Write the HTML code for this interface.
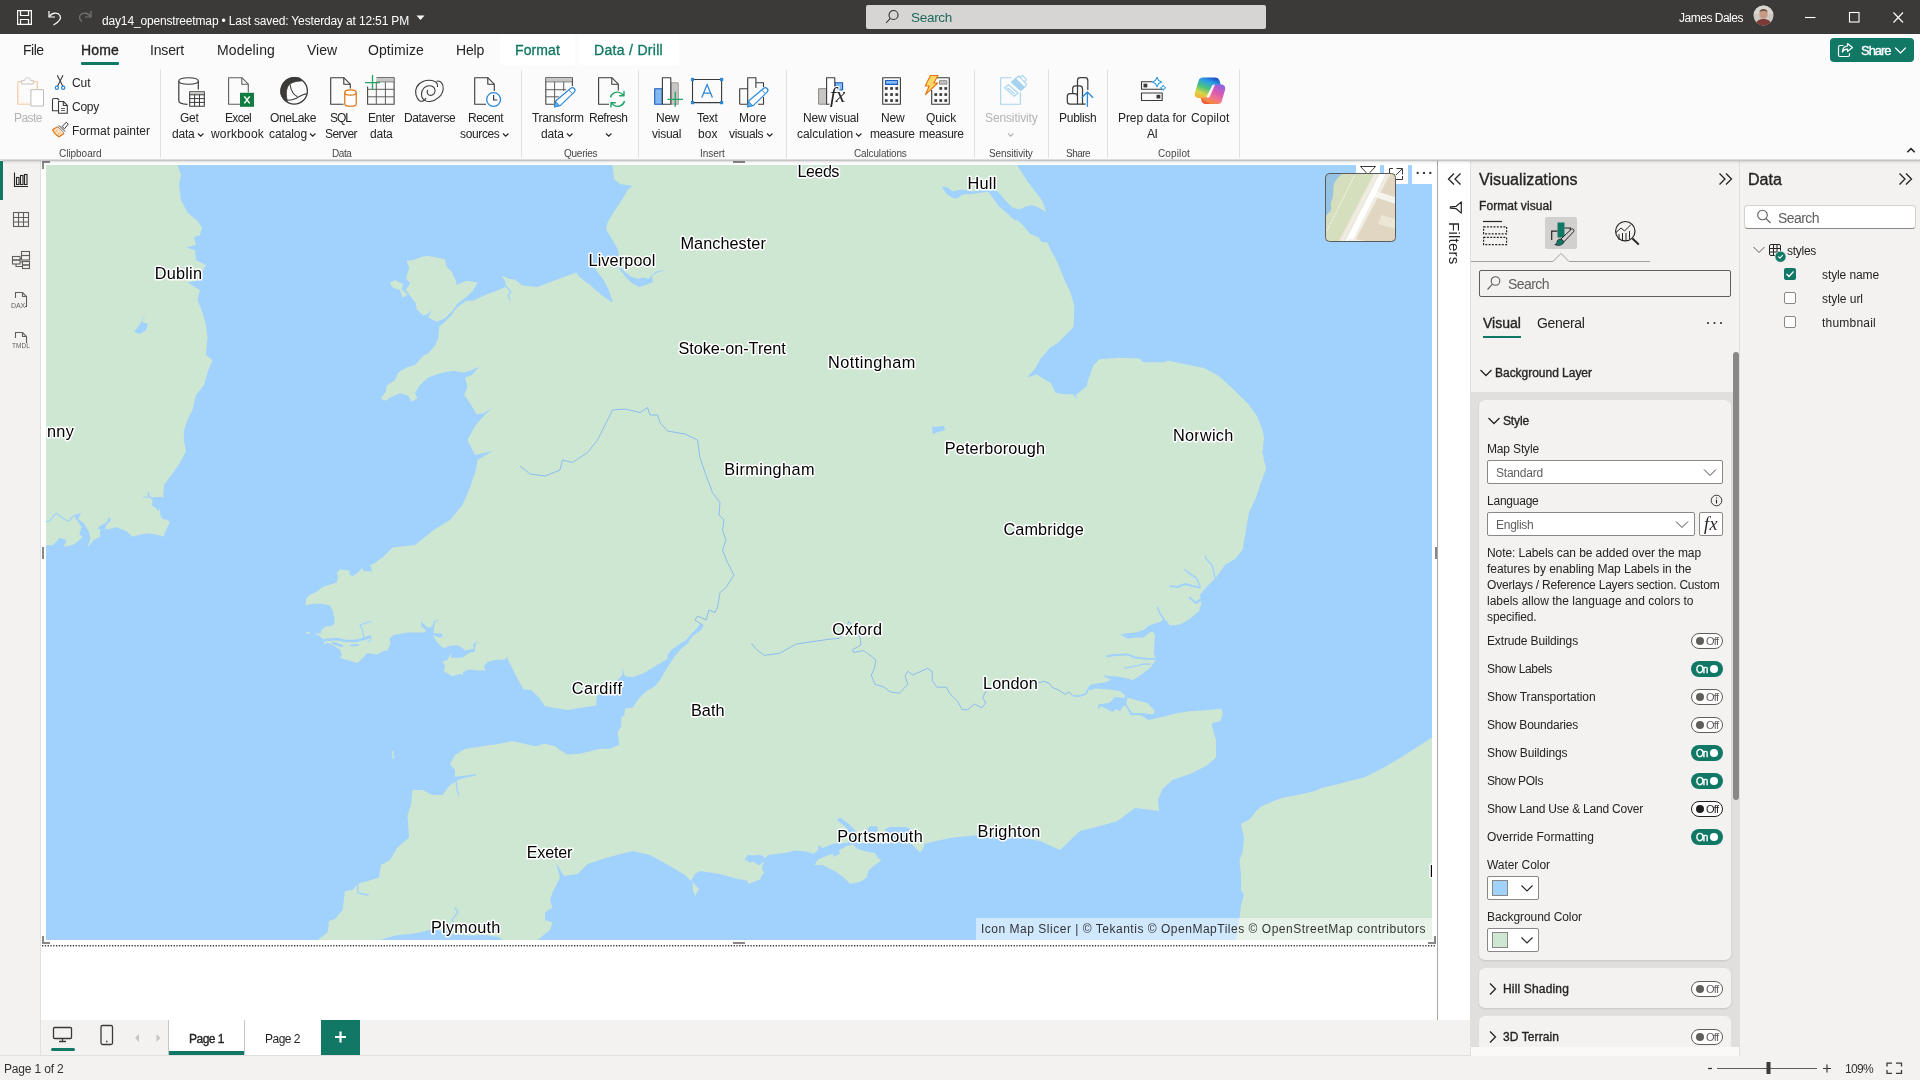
<!DOCTYPE html>
<html lang="en"><head><meta charset="utf-8"><title>day14_openstreetmap - Power BI Desktop</title>
<style>
html,body{margin:0;padding:0;background:#f3f2f1;}
body{width:1920px;height:1080px;overflow:hidden;font-family:"Liberation Sans",sans-serif;}
#app{position:relative;width:1920px;height:1080px;overflow:hidden;background:#f3f2f1;}
.t{position:absolute;white-space:nowrap;}
.a{position:absolute;}
svg{position:absolute;overflow:visible;}
.ml{font-family:"Liberation Sans",sans-serif;font-size:16.3px;fill:#000;stroke:#fff;stroke-width:3px;stroke-linejoin:round;paint-order:stroke fill;}
.t{will-change:transform;}

</style></head>
<body>
<div id="app">
<div class="a" style="left:0;top:0;width:1920px;height:34px;background:#3b3a39;"></div>
<svg class="a" style="left:0;top:0" width="100" height="34" viewBox="0 0 100 34" fill="none" stroke="#fff" stroke-width="1.2">
<path d="M17.6,10.600 H31.400 V24.400 H17.600 Z"/><path d="M20.500,10.600 V15.500 H28.500 V10.600"/><path d="M20.500,24.400 V19.500 H28.500 V24.400"/>
<path d="M49,11 V17 H55"/><path d="M49.500,16.500 C52,12.500 58,12 60,15.500 C62,19.500 58,22.500 53.500,25"/>
<g stroke="#797775"><path d="M91,11 V17 H85"/><path d="M90.500,16.500 C88,12.500 82,12 80,15.500 C79,18 80,20 82,21.500"/></g>
</svg>
<div class="t" style="left:102.00px;top:14px;font-size:12px;line-height:14px;color:#fff;letter-spacing:-0.159px;">day14_openstreetmap • Last saved: Yesterday at 12:51 PM</div>
<svg class="a" style="left:415px;top:14px" width="12" height="8"><path d="M1.500,1.500 H9.500 L5.500,6 Z" fill="#fff"/></svg>
<div class="a" style="left:866px;top:5px;width:400px;height:24px;background:#d6d5d3;border-radius:2px;"></div>
<svg class="a" style="left:884px;top:8px" width="18" height="18" viewBox="0 0 18 18" fill="none" stroke="#323130" stroke-width="1.100"><circle cx="9.500" cy="7" r="4.500"/><path d="M6.300,10.300 L2,15"/></svg>
<div class="t" style="left:911.30px;top:10px;font-size:13.5px;line-height:15px;color:#20695b;letter-spacing:-0.296px;">Search</div>
<div class="t" style="left:1679.00px;top:11px;font-size:12px;line-height:14px;color:#fff;letter-spacing:-0.487px;">James Dales</div>
<svg class="a" style="left:1753px;top:5px" width="21" height="21" viewBox="0 0 21 21"><defs><clipPath id="av"><circle cx="10.500" cy="10.500" r="10"/></clipPath></defs>
<g clip-path="url(#av)"><rect width="21" height="21" fill="#cfc9c4"/><rect x="0" y="0" width="21" height="9" fill="#d9d6d2"/><ellipse cx="10.500" cy="9" rx="4.200" ry="5" fill="#c79a85"/><path d="M6.300,7 C7,3 14,3 14.700,7 C13,5.500 8,5.500 6.300,7Z" fill="#6b5548"/><path d="M2,21 C3,15 7,14 10.500,14 C14,14 18,15 19,21Z" fill="#7c3a36"/></g></svg>
<svg class="a" style="left:1800px;top:8px" width="110" height="20" viewBox="1800 8 110 20" fill="none" stroke="#fff" stroke-width="1.100">
<path d="M1805,17.500 H1815.500"/><rect x="1849.500" y="12.500" width="9.500" height="9.500"/><path d="M1893.500,12.500 L1903,22.500 M1903,12.500 L1893.500,22.500"/></svg>
<div class="a" style="left:0;top:34px;width:1920px;height:126px;background:#fbfbfb;"></div>
<div class="a" style="left:0;top:159px;width:1920px;height:1px;background:#d8d6d4;"></div>
<div class="a" style="left:0;top:160px;width:1920px;height:1px;background:#e8e6e4;"></div>
<div class="a" style="left:500px;top:35px;width:75px;height:30px;background:#fff;"></div>
<div class="a" style="left:579px;top:35px;width:100px;height:30px;background:#fff;"></div>
<div class="t" style="left:23.00px;top:42px;font-size:14px;line-height:16px;color:#252423;letter-spacing:-0.515px;">File</div>
<div class="t" style="left:81.00px;top:42px;font-size:14px;line-height:16px;color:#252423;letter-spacing:0.164px;-webkit-text-stroke:0.35px #252423;">Home</div>
<div class="t" style="left:150.00px;top:42px;font-size:14px;line-height:16px;color:#252423;letter-spacing:-0.169px;">Insert</div>
<div class="t" style="left:217.00px;top:42px;font-size:14px;line-height:16px;color:#252423;letter-spacing:0.148px;">Modeling</div>
<div class="t" style="left:307.00px;top:42px;font-size:14px;line-height:16px;color:#252423;letter-spacing:-0.023px;">View</div>
<div class="t" style="left:368.00px;top:42px;font-size:14px;line-height:16px;color:#252423;letter-spacing:0.096px;">Optimize</div>
<div class="t" style="left:456.00px;top:42px;font-size:14px;line-height:16px;color:#252423;letter-spacing:-0.198px;">Help</div>
<div class="t" style="left:515.00px;top:42px;font-size:14px;line-height:16px;color:#117865;letter-spacing:0.110px;-webkit-text-stroke:0.35px #117865;">Format</div>
<div class="t" style="left:594.00px;top:42px;font-size:14px;line-height:16px;color:#117865;letter-spacing:0.305px;-webkit-text-stroke:0.35px #117865;">Data / Drill</div>
<div class="a" style="left:81px;top:62px;width:38px;height:3px;background:#117865;border-radius:1px;"></div>
<div class="a" style="left:1830px;top:38px;width:84px;height:24px;background:#117865;border-radius:4px;"></div>
<svg class="a" style="left:1836px;top:41px" width="74" height="20" viewBox="1840 41 74 20" fill="none" stroke="#fff" stroke-width="1.200" stroke-linejoin="round" stroke-linecap="round">
<path d="M1847,45.500 H1844 C1843,45.500 1842.500,46 1842.500,47 V55 C1842.500,56 1843,56.500 1844,56.500 H1852 C1853,56.500 1853.500,56 1853.500,55 V53.500"/>
<path d="M1851.500,43.500 L1856.500,47.500 L1851.500,51.500 V49.200 C1849,49 1847.500,50 1846.300,52 C1846.500,48.500 1848.500,46.200 1851.500,46 Z"/>
<path d="M1899.500,48 L1904.500,53 L1909.500,48"/></svg>
<div class="t" style="left:1861.00px;top:43px;font-size:13px;line-height:15px;color:#fff;letter-spacing:-1.038px;-webkit-text-stroke:0.35px #fff;">Share</div>
<div class="a" style="left:0;top:161px;width:40px;height:896px;background:#f3f2f1;"></div>
<div class="a" style="left:0;top:161px;width:3px;height:39px;background:#117865;"></div>
<svg class="a" style="left:0;top:160px" width="40" height="200" viewBox="0 160 40 200" fill="none" stroke="#252423" stroke-width="1.100">
<path d="M14.500,172.500 V186.500 H28"/><rect x="16.500" y="177.500" width="2.500" height="7"/><rect x="20.500" y="175.500" width="2.500" height="9"/><rect x="24.500" y="174.500" width="2.500" height="10"/>
<g stroke="#605e5c"><rect x="13.500" y="212.500" width="15" height="14"/><path d="M13.500,217.500 H28.500 M13.500,222 H28.500 M18.500,212.500 V226.500 M23.500,212.500 V226.500"/>
<rect x="21.500" y="251.500" width="8" height="4"/><rect x="21.500" y="255.500" width="8" height="4.500"/><rect x="12.500" y="256.500" width="7.500" height="3.500"/><rect x="12.500" y="260" width="7.500" height="4"/><rect x="22.500" y="261.500" width="7" height="3.500"/><rect x="22.500" y="265" width="7" height="3.500"/><path d="M20,258.500 H21.500 M20,262 H22.500 M16,264 V266.500 H22.500"/>
<path d="M15.500,298 V292.500 H22.500 L26.500,296.500 V306.500 H25 M22.500,292.500 V296.500 H26.500"/>
<path d="M15.500,338 V332.500 H22.500 L26.500,336.500 V343 M22.500,332.500 V336.500 H26.500"/></g></svg>
<div class="t" style="left:10.70px;top:302px;font-size:7px;line-height:7px;color:#605e5c;letter-spacing:-0.131px;">DAX</div>
<div class="t" style="left:11.70px;top:342px;font-size:6.5px;line-height:7px;color:#605e5c;letter-spacing:0.076px;">TMDL</div>
<div class="a" style="left:41px;top:1020px;width:1430px;height:36px;background:#f3f2f1;"></div>
<div class="a" style="left:0;top:1055px;width:1920px;height:1px;background:#e1dfdd;"></div><div class="a" style="left:40px;top:1020px;width:1px;height:35px;background:#e1dfdd;"></div>
<div class="a" style="left:0;top:1056px;width:1920px;height:24px;background:#f3f2f1;"></div>
<svg class="a" style="left:50px;top:1022px" width="120" height="32" viewBox="50 1022 120 32" fill="none" stroke="#3b3a39" stroke-width="1.300">
<rect x="53.500" y="1027.500" width="18" height="11" rx="1"/><path d="M59,1041.500 H66 M62.500,1038.500 V1041.500"/>
<rect x="101" y="1025.500" width="11.500" height="19" rx="1.500"/><path d="M106,1041.500 H107.500"/>
<path d="M139,1034 L135,1038 L139,1042 Z" fill="#c8c6c4" stroke="none"/><path d="M156.500,1034 L160.500,1038 L156.500,1042 Z" fill="#c8c6c4" stroke="none"/></svg>
<div class="a" style="left:51px;top:1048px;width:24px;height:3px;background:#117865;border-radius:1.5px;"></div>
<div class="a" style="left:169px;top:1020px;width:75px;height:35px;background:#fff;"></div>
<div class="a" style="left:168px;top:1020px;width:1px;height:35px;background:#c8c6c4;"></div>
<div class="a" style="left:244px;top:1020px;width:1px;height:35px;background:#c8c6c4;"></div>
<div class="a" style="left:245px;top:1020px;width:76px;height:35px;background:#fff;"></div>
<div class="a" style="left:169px;top:1051px;width:75px;height:4px;background:#117865;"></div>
<div class="t" style="left:189.00px;top:1032px;font-size:12px;line-height:14px;color:#252423;letter-spacing:-0.506px;-webkit-text-stroke:0.35px #252423;">Page 1</div>
<div class="t" style="left:265.00px;top:1032px;font-size:12px;line-height:14px;color:#252423;letter-spacing:-0.506px;">Page 2</div>
<div class="a" style="left:321px;top:1020px;width:39px;height:35px;background:#117865;"></div>
<svg class="a" style="left:321px;top:1020px" width="39" height="35"><path d="M14,17 H25 M19.500,11.500 V22.500" stroke="#fff" stroke-width="2.200"/></svg>
<div class="t" style="left:4.00px;top:1062px;font-size:12px;line-height:14px;color:#323130;letter-spacing:-0.171px;">Page 1 of 2</div>
<svg class="a" style="left:1700px;top:1058px" width="220" height="22" viewBox="1700 1058 220 22" fill="none" stroke="#3b3a39" stroke-width="1">
<path d="M1708,1068.500 H1712" stroke-width="1.300"/><path d="M1717,1068.500 H1817" stroke="#605e5c"/><rect x="1766.500" y="1062" width="4" height="12" fill="#3b3a39" stroke="none"/>
<path d="M1823,1068.500 H1831 M1827,1064.500 V1072.500" stroke-width="1.200"/>
<path d="M1887,1066.500 V1063.200 H1892 M1896,1063.200 H1901.500 V1066.500 M1901.500,1070 V1073.300 H1896 M1892,1073.300 H1887 V1070" stroke-width="1.300"/></svg>
<div class="t" style="left:1845.00px;top:1062px;font-size:12px;line-height:14px;color:#323130;letter-spacing:-0.673px;">109%</div>
<div class="a" style="left:160px;top:70px;width:1px;height:88px;background:#e1dfdd;"></div>
<div class="a" style="left:521px;top:70px;width:1px;height:88px;background:#e1dfdd;"></div>
<div class="a" style="left:638px;top:70px;width:1px;height:88px;background:#e1dfdd;"></div>
<div class="a" style="left:786px;top:70px;width:1px;height:88px;background:#e1dfdd;"></div>
<div class="a" style="left:974px;top:70px;width:1px;height:88px;background:#e1dfdd;"></div>
<div class="a" style="left:1048px;top:70px;width:1px;height:88px;background:#e1dfdd;"></div>
<div class="a" style="left:1107px;top:70px;width:1px;height:88px;background:#e1dfdd;"></div>
<div class="a" style="left:1239px;top:70px;width:1px;height:88px;background:#e1dfdd;"></div>
<div class="t" style="left:58.75px;top:148px;font-size:10px;line-height:11px;color:#484644;letter-spacing:-0.034px;">Clipboard</div>
<div class="t" style="left:331.65px;top:148px;font-size:10px;line-height:11px;color:#484644;letter-spacing:-0.406px;">Data</div>
<div class="t" style="left:563.75px;top:148px;font-size:10px;line-height:11px;color:#484644;letter-spacing:-0.245px;">Queries</div>
<div class="t" style="left:700.40px;top:148px;font-size:10px;line-height:11px;color:#484644;letter-spacing:-0.068px;">Insert</div>
<div class="t" style="left:853.95px;top:148px;font-size:10px;line-height:11px;color:#484644;letter-spacing:-0.148px;">Calculations</div>
<div class="t" style="left:989.15px;top:148px;font-size:10px;line-height:11px;color:#484644;letter-spacing:-0.120px;">Sensitivity</div>
<div class="t" style="left:1065.80px;top:148px;font-size:10px;line-height:11px;color:#484644;letter-spacing:-0.537px;">Share</div>
<div class="t" style="left:1157.80px;top:148px;font-size:10px;line-height:11px;color:#484644;letter-spacing:0.125px;">Copilot</div>
<div class="t" style="left:14.00px;top:111px;font-size:12px;line-height:14px;color:#b5b3b1;letter-spacing:-0.537px;">Paste</div>
<div class="t" style="left:72.00px;top:76px;font-size:12px;line-height:14px;color:#252423;letter-spacing:-0.058px;">Cut</div>
<div class="t" style="left:72.00px;top:100px;font-size:12px;line-height:14px;color:#252423;letter-spacing:-0.253px;">Copy</div>
<div class="t" style="left:72.00px;top:124px;font-size:12px;line-height:14px;color:#252423;letter-spacing:-0.002px;">Format painter</div>
<div class="t" style="left:179.75px;top:111px;font-size:12px;line-height:14px;color:#252423;letter-spacing:-0.281px;">Get</div>
<div class="t" style="left:171.80px;top:127px;font-size:12px;line-height:14px;color:#252423;letter-spacing:-0.214px;">data</div>
<svg class="a" style="left:196.5px;top:131.8px" width="8" height="6"><path d="M1,1.500 L3.700,4.200 L6.400,1.500" fill="none" stroke="#252423" stroke-width="1.100"/></svg>
<div class="t" style="left:224.50px;top:111px;font-size:12px;line-height:14px;color:#252423;letter-spacing:-0.669px;">Excel</div>
<div class="t" style="left:211.00px;top:127px;font-size:12px;line-height:14px;color:#252423;letter-spacing:0.205px;">workbook</div>
<div class="t" style="left:270.00px;top:111px;font-size:12px;line-height:14px;color:#252423;letter-spacing:-0.386px;">OneLake</div>
<div class="t" style="left:268.75px;top:127px;font-size:12px;line-height:14px;color:#252423;letter-spacing:-0.099px;">catalog</div>
<svg class="a" style="left:308.95px;top:131.8px" width="8" height="6"><path d="M1,1.500 L3.700,4.200 L6.400,1.500" fill="none" stroke="#252423" stroke-width="1.100"/></svg>
<div class="t" style="left:330.40px;top:111px;font-size:12px;line-height:14px;color:#252423;letter-spacing:-1.071px;">SQL</div>
<div class="t" style="left:325.00px;top:127px;font-size:12px;line-height:14px;color:#252423;letter-spacing:-0.557px;">Server</div>
<div class="t" style="left:367.85px;top:111px;font-size:12px;line-height:14px;color:#252423;letter-spacing:-0.396px;">Enter</div>
<div class="t" style="left:369.55px;top:127px;font-size:12px;line-height:14px;color:#252423;letter-spacing:-0.214px;">data</div>
<div class="t" style="left:403.75px;top:111px;font-size:12px;line-height:14px;color:#252423;letter-spacing:-0.377px;">Dataverse</div>
<div class="t" style="left:467.90px;top:111px;font-size:12px;line-height:14px;color:#252423;letter-spacing:-0.504px;">Recent</div>
<div class="t" style="left:460.00px;top:127px;font-size:12px;line-height:14px;color:#252423;letter-spacing:-0.360px;">sources</div>
<svg class="a" style="left:501.7px;top:131.8px" width="8" height="6"><path d="M1,1.500 L3.700,4.200 L6.400,1.500" fill="none" stroke="#252423" stroke-width="1.100"/></svg>
<div class="t" style="left:532.45px;top:111px;font-size:12px;line-height:14px;color:#252423;letter-spacing:-0.281px;">Transform</div>
<div class="t" style="left:541.20px;top:127px;font-size:12px;line-height:14px;color:#252423;letter-spacing:-0.114px;">data</div>
<svg class="a" style="left:566.3px;top:131.8px" width="8" height="6"><path d="M1,1.500 L3.700,4.200 L6.400,1.500" fill="none" stroke="#252423" stroke-width="1.100"/></svg>
<div class="t" style="left:589.25px;top:111px;font-size:12px;line-height:14px;color:#252423;letter-spacing:-0.503px;">Refresh</div>
<svg class="a" style="left:604.8px;top:131.8px" width="8" height="6"><path d="M1,1.500 L3.700,4.200 L6.400,1.500" fill="none" stroke="#252423" stroke-width="1.100"/></svg>
<div class="t" style="left:655.85px;top:111px;font-size:12px;line-height:14px;color:#252423;letter-spacing:-0.235px;">New</div>
<div class="t" style="left:652.40px;top:127px;font-size:12px;line-height:14px;color:#252423;letter-spacing:-0.247px;">visual</div>
<div class="t" style="left:697.10px;top:111px;font-size:12px;line-height:14px;color:#252423;letter-spacing:-0.402px;">Text</div>
<div class="t" style="left:697.50px;top:127px;font-size:12px;line-height:14px;color:#252423;letter-spacing:0.084px;">box</div>
<div class="t" style="left:738.75px;top:111px;font-size:12px;line-height:14px;color:#252423;letter-spacing:0.040px;">More</div>
<div class="t" style="left:729.45px;top:127px;font-size:12px;line-height:14px;color:#252423;letter-spacing:-0.354px;">visuals</div>
<svg class="a" style="left:765.85px;top:131.8px" width="8" height="6"><path d="M1,1.500 L3.700,4.200 L6.400,1.500" fill="none" stroke="#252423" stroke-width="1.100"/></svg>
<div class="t" style="left:803.45px;top:111px;font-size:12px;line-height:14px;color:#252423;letter-spacing:-0.232px;">New visual</div>
<div class="t" style="left:796.75px;top:127px;font-size:12px;line-height:14px;color:#252423;letter-spacing:-0.046px;">calculation</div>
<svg class="a" style="left:855.1500000000001px;top:131.8px" width="8" height="6"><path d="M1,1.500 L3.700,4.200 L6.400,1.500" fill="none" stroke="#252423" stroke-width="1.100"/></svg>
<div class="t" style="left:880.65px;top:111px;font-size:12px;line-height:14px;color:#252423;letter-spacing:-0.169px;">New</div>
<div class="t" style="left:869.60px;top:127px;font-size:12px;line-height:14px;color:#252423;letter-spacing:-0.298px;">measure</div>
<div class="t" style="left:926.20px;top:111px;font-size:12px;line-height:14px;color:#252423;letter-spacing:-0.135px;">Quick</div>
<div class="t" style="left:918.70px;top:127px;font-size:12px;line-height:14px;color:#252423;letter-spacing:-0.298px;">measure</div>
<div class="t" style="left:984.85px;top:111px;font-size:12px;line-height:14px;color:#b5b3b1;letter-spacing:-0.120px;">Sensitivity</div>
<svg class="a" style="left:1006.9px;top:131.8px" width="8" height="6"><path d="M1,1.500 L3.700,4.200 L6.400,1.500" fill="none" stroke="#b5b3b1" stroke-width="1.100"/></svg>
<div class="t" style="left:1059.05px;top:111px;font-size:12px;line-height:14px;color:#252423;letter-spacing:-0.265px;">Publish</div>
<div class="t" style="left:1118.40px;top:111px;font-size:12px;line-height:14px;color:#252423;letter-spacing:-0.090px;">Prep data for</div>
<div class="t" style="left:1147.10px;top:127px;font-size:12px;line-height:14px;color:#252423;letter-spacing:-0.469px;">AI</div>
<div class="t" style="left:1190.85px;top:111px;font-size:12px;line-height:14px;color:#252423;letter-spacing:0.164px;">Copilot</div>
<svg class="a" style="left:1905px;top:145px" width="12" height="10"><path d="M2.300,7.300 L6,3.600 L9.700,7.300" fill="none" stroke="#252423" stroke-width="1.500"/></svg>
<svg class="a" style="left:0;top:66px" width="1260" height="80" viewBox="0 66 1260 80" fill="none" stroke="#3b3a39" stroke-width="1.100" stroke-linejoin="round">
<!-- Paste (disabled) -->
<path d="M22,81.500 H17.700 V104.200 H30 M33.500,81.500 H37.400 V89" stroke="#f3c9a0" stroke-width="1"/>
<path d="M22,82.500 H18.700 V103.200 H30 M33.500,82.500 H36.400 V89" stroke="#fdebd3" stroke-width="1"/>
<path d="M21.700,84 V80.500 H24.500 C24.500,76.800 30.500,76.800 30.500,80.500 H33.300 V84 Z" stroke="#c8c6c4" fill="#faf9f8" stroke-width="1"/>
<rect x="30.900" y="89.700" width="12.600" height="16.300" stroke="#bebbb8" fill="#fff" stroke-width="1"/>
<!-- Cut -->
<path d="M57.300,75.300 L62.800,86.300 M63,75.300 L57.500,86.300" stroke-width="1.100"/>
<circle cx="56.900" cy="87.800" r="1.600" stroke="#2b88d8" stroke-width="1.200"/><circle cx="63.200" cy="87.800" r="1.600" stroke="#2b88d8" stroke-width="1.200"/>
<!-- Copy -->
<path d="M58,110.800 H52.500 V100 C52.500,99 53,98.500 54,98.500 H57.500 L59.300,100.300"/><path d="M58.500,101.500 H63.500 L67.300,105.300 V113.200 H58.500 Z"/><path d="M63.300,101.700 V105.500 H67.100"/><path d="M61,108.500 H65 M61,110.500 H65" stroke-width="0.800"/>
<!-- Format painter -->
<path d="M66.300,122.200 L68.200,124.100 L64.500,128.800 L62.200,126.500 Z" stroke-width="1"/>
<path d="M58.900,125.300 L65.200,131.600 M57.700,126.600 L64,132.900" stroke-width="1"/>
<path d="M57.500,126.800 L52.600,129.700 C54,133 56.500,135.500 59.200,136.800 L63.600,133.800 L63.900,132.800" stroke="#d9730d" fill="#fce0c0" stroke-width="1.100"/>
<path d="M55,131.500 L58,130.500 M57.500,134.500 L60.500,132.500" stroke="#f0a860" stroke-width="0.800"/>
<!-- Get data -->
<path d="M178.800,81 V100.800 C178.800,102.800 182,104.200 187.500,104.400 M178.800,81 C178.800,76.700 198.300,76.700 198.300,81 V89.500 M178.800,81 C178.800,85.300 198.300,85.300 198.300,81" stroke-width="1.200"/>
<rect x="189.700" y="91.700" width="14.600" height="14.600" fill="#fff" stroke-width="1.100"/><path d="M190.200,92.200 H203.800 V94.500 H190.200Z" fill="#c8c6c4" stroke="none"/><path d="M189.700,94.800 H204.300 M189.700,98.600 H204.300 M189.700,102.400 H204.300 M194.600,94.800 V106.300 M199.500,94.800 V106.300" stroke-width="1"/>
<!-- Excel -->
<path d="M240,104.200 H228.600 V77.700 H241.800 L248.300,84.200 V92.500" stroke="#605e5c"/><path d="M241.800,77.700 V84.200 H248.300" stroke="#605e5c"/>
<rect x="240" y="92.800" width="14" height="14" fill="#107c41" stroke="none"/><path d="M244.300,96.400 L249.700,103.400 M249.700,96.400 L244.300,103.400" stroke="#fff" stroke-width="1.500"/>
<!-- OneLake -->
<circle cx="294.200" cy="90.900" r="13.200" stroke-width="1.300"/>
<path d="M300,78.200 C295,76.500 289,77.500 285.500,80.800 C281.500,84.500 280,89.500 281,94.500 C281.800,97.500 283.800,100 287.500,101.200 C286,96.500 285.800,91 287.500,87.200 C289.300,83.500 293,81.200 301.700,80.900 Z" fill="#3b3a39" stroke="#3b3a39" stroke-width="0.800"/>
<path d="M290,84.300 C290.500,88 291.500,91 293,93 C294.300,94.800 296,96 297.500,96.700" stroke-width="1.100"/>
<path d="M287.500,100.300 C290.500,100.300 294,99.500 296.500,98.200 C299.500,96.500 302.500,94 307.200,93.800" stroke-width="1.100"/>
<!-- SQL -->
<path d="M343.500,104.200 H330.700 V77.700 H343.800 L350.300,84.200 V88.500"/><path d="M343.800,77.700 V84.200 H350.300"/>
<g stroke="#d9730d" stroke-width="1.200"><path d="M344.800,92.500 V104 C344.800,107 356.200,107 356.200,104 V92.500" fill="#fff"/><ellipse cx="350.500" cy="92.500" rx="5.700" ry="2.600" fill="#fff"/></g>
<!-- Enter data -->
<path d="M367.600,86.500 V104.200 H394.100 V77.700 H376.500" stroke="#484644"/><path d="M367.600,89.300 H394.100 M367.600,96.800 H394.100 M376.300,81.800 V104.200 M385.400,81.800 V104.200 M376.300,81.800 H394.100" stroke="#605e5c" stroke-width="1"/><path d="M376.300,78.200 H393.600 V81.300 H376.300Z" fill="#c8c6c4" stroke="none"/>
<path d="M372.500,75.100 V90.100 M365,82.600 H380" stroke="#21a366" stroke-width="1.300"/>
<!-- Dataverse -->
<path d="M419.800,101 C416,98 414.500,92 416.500,87.500 C419,82 426,79.500 432,80.500 C436,81.200 438,83.500 437.500,87" stroke-width="1.100"/>
<path d="M436.500,81.200 C441,80.300 443.500,84 443.200,89 C442.800,95 437,100.500 430,101.500 C425,102 421.500,99 421.500,94.500 C421.500,89 425.500,85.500 430,85.800 C433.500,86 435.500,88.500 435,91.500 C434.500,94.500 431.500,96 429,95 C427,94 426.500,91.500 428,90" stroke-width="1.100"/>
<path d="M419.800,101 C422.500,102 425,100.500 426,98" stroke-width="1.100"/>
<!-- Recent sources -->
<path d="M486,104.200 H474.700 V77.700 H487.800 L494.300,84.200 V91"/><path d="M487.800,77.700 V84.200 H494.300"/>
<circle cx="493.600" cy="99.500" r="6.900" stroke="#2b88d8" fill="#fff" stroke-width="1.300"/><path d="M493.600,95 V100 H497.300" stroke-width="1.200"/>
<!-- Transform data -->
<path d="M558,104.200 H545.800 V77.700 H572.400 V86" stroke="#484644"/><path d="M545.800,89.700 H566 M545.800,96.800 H559 M554.600,81.800 V104.200 M563.700,81.800 V91 M545.800,81.800 H572.400" stroke="#605e5c" stroke-width="1"/><path d="M546.300,78.200 H571.900 V81.300 H546.300Z" fill="#c8c6c4" stroke="none"/>
<path d="M570.5,88.5 C571.5,87.5 573.2,87.5 574.2,88.5 C575.2,89.5 575.2,91.1 574.2,92.1 L560.5,105.4 L554.500,106.800 L555.900,100.800 Z" fill="#fff" stroke="#2b88d8" stroke-width="1.200"/><path d="M554.500,106.800 L555.700,101.500 L559.800,105.600 Z" fill="#69afe5" stroke="#2b88d8" stroke-width="0.800"/><path d="M568.9,90.2 L572.5,93.8" stroke="#2b88d8" stroke-width="1"/>
<!-- Refresh -->
<path d="M609,104.200 H598.600 V77.700 H611.800 L618.300,84.200 V90.500"/><path d="M611.800,77.700 V84.200 H618.300"/>
<g stroke="#21a366" stroke-width="1.400"><path d="M610.500,97.500 C611.500,92.800 617,90.500 621.500,93.500 L623.500,95.300 M624,91 V95.800 H619.200"/><path d="M624.500,101 C623.500,105.700 618,108 613.500,105 L611.500,103.200 M611,107.500 V102.700 H615.800"/></g>
<!-- New visual -->
<rect x="654.700" y="88.700" width="7.600" height="15.500" fill="#83b9f0" stroke="#185abd" stroke-width="1.100"/>
<rect x="671" y="82.800" width="7.300" height="21.400" fill="#c8c6c4" stroke="#a19f9d" stroke-width="1"/>
<rect x="662.400" y="77.700" width="8.400" height="26.500" fill="#fff"/>
<path d="M675.300,91.800 V106.800 M667.500,99.400 H683" stroke="#21a366" stroke-width="1.300"/>
<!-- Text box -->
<rect x="692.500" y="79.500" width="29.100" height="23.100" stroke-width="1.100"/><g fill="#2b88d8" stroke="none"><rect x="690.900" y="77.900" width="3.200" height="3.200"/><rect x="720" y="77.900" width="3.200" height="3.200"/><rect x="690.900" y="101" width="3.200" height="3.200"/><rect x="720" y="101" width="3.200" height="3.200"/></g>
<path d="M701.800,97.600 L707.100,84.600 L712.400,97.600 M703.600,93.200 H710.600" stroke="#2b88d8" stroke-width="1.300" stroke-linejoin="miter"/>
<!-- More visuals -->
<path d="M739.700,104.200 V88.700 H747.700 M747.700,104.200 V77.700 H755.900 V88 M755.900,82.800 H763.500 V87 M739.700,104.200 H752 M763.500,97 V104.200 H758"/>
<path d="M763.400,88.500 C764.400,87.500 766.100,87.500 767.100,88.500 C768.100,89.500 768.100,91.100 767.100,92.100 L753.500,105.400 L747.500,106.800 L748.900,100.800 Z" fill="#fff" stroke="#2b88d8" stroke-width="1.200"/><path d="M747.500,106.800 L748.700,101.500 L752.800,105.600 Z" fill="#69afe5" stroke="#2b88d8" stroke-width="0.800"/><path d="M761.9,90.2 L765.5,93.8" stroke="#2b88d8" stroke-width="1"/>
<!-- New visual calc -->
<rect x="818.600" y="88.700" width="7.900" height="15.500" fill="#c8c6c4" stroke="#8a8886" stroke-width="1"/>
<path d="M835,82.800 H842.600 V90 H835 Z" fill="#83b9f0" stroke="#185abd" stroke-width="1.100"/>
<path d="M832,104.200 H826.600 V77.700 H834.800 V91" fill="#fff"/>
<!-- New measure -->
<rect x="882.700" y="77.700" width="17.700" height="26.500" stroke-width="1.100"/><rect x="885.500" y="80.500" width="12.100" height="3.900" fill="#83b9f0" stroke="#185abd" stroke-width="1.100"/>
<g fill="#3b3a39" stroke="none"><rect x="884.900" y="87.100" width="2.700" height="2.700"/><rect x="890.200" y="87.100" width="2.700" height="2.700"/><rect x="895.400" y="87.100" width="2.700" height="2.700"/><rect x="884.900" y="93.200" width="2.700" height="2.700"/><rect x="890.200" y="93.200" width="2.700" height="2.700"/><rect x="895.400" y="93.200" width="2.700" height="2.700"/><rect x="884.900" y="99.200" width="2.700" height="2.700"/><rect x="890.200" y="99.200" width="2.700" height="2.700"/><rect x="895.400" y="99.200" width="2.700" height="2.700"/></g>
<!-- Quick measure -->
<path d="M937,77.700 H949.300 V104.200 H931.700 V90"/><rect x="939.500" y="80.700" width="7.300" height="3.400" fill="#c8c6c4" stroke="#8a8886" stroke-width="1"/>
<g fill="#3b3a39" stroke="none"><rect x="939.400" y="87.100" width="2.700" height="2.700"/><rect x="944.400" y="87.100" width="2.700" height="2.700"/><rect x="934.400" y="93.200" width="2.700" height="2.700"/><rect x="939.400" y="93.200" width="2.700" height="2.700"/><rect x="944.400" y="93.200" width="2.700" height="2.700"/><rect x="934.400" y="99.200" width="2.700" height="2.700"/><rect x="939.400" y="99.200" width="2.700" height="2.700"/><rect x="944.400" y="99.200" width="2.700" height="2.700"/></g>
<path d="M930.400,75.500 H938 L933.800,83 H937.700 L925.400,94.700 L929.200,86 H925.200 Z" fill="#fbd76a" stroke="#e8730d" stroke-width="1.100"/>
<!-- Sensitivity (disabled) -->
<g stroke="#a6d2ee" stroke-width="1.100"><path d="M1011.500,77.700 H1000.700 V104.200 H1020.300 V92"/><path d="M1004.600,87.800 L1008.500,84.800 L1018,93 L1014.300,96.300 Z M1007.200,87.800 L1014.800,94" fill="#fff"/><path d="M1011.500,82 L1015.500,78.500 L1024.500,87.500 L1020.500,90.500 Z" fill="#a6d2ee"/><path d="M1019,78.500 L1022.300,75.300 L1026.500,79.600 L1023.300,82.800 Z" fill="#fff"/><path d="M1015.500,78.500 L1018.800,76 L1026.800,84.500 L1024.500,87.500 Z" fill="#fff"/></g>
<!-- Publish -->
<g stroke-width="1.200"><path d="M1077.500,96 V80.500 C1077.500,78.700 1078.500,77.700 1080.300,77.700 H1085 C1086.800,77.700 1087.800,78.700 1087.800,80.500 V90"/><path d="M1072.700,94 V88.700 C1072.700,86.900 1073.700,85.900 1075.500,85.900 H1079.700 C1081.500,85.900 1082.500,86.900 1082.500,88.700 V104.200"/><path d="M1070,93.700 H1074.700 C1076.500,93.700 1077.500,94.700 1077.500,96.500 V104.200 H1070 C1068.200,104.200 1067.300,103.200 1067.300,101.500 V96.500 C1067.300,94.700 1068.200,93.700 1070,93.700 Z M1077.500,104.200 H1085.500"/></g>
<path d="M1087.400,106.800 V92 M1081.700,97.700 L1087.400,92 L1093.100,97.700" stroke="#2b88d8" stroke-width="1.300"/>
<!-- Prep data for AI -->
<path d="M1152,81.800 H1141.500 V89.300 H1162.200 V88"/><rect x="1141.500" y="93" width="20.700" height="7.500"/><rect x="1143.500" y="83.700" width="3.800" height="3.700" fill="#3b3a39" stroke="none"/><rect x="1156.500" y="94.800" width="3.800" height="3.700" fill="#3b3a39" stroke="none"/>
<path d="M1157,77.300 L1158.600,80.400 L1161.700,82 L1158.600,83.600 L1157,86.700 L1155.400,83.600 L1152.300,82 L1155.400,80.400 Z" fill="#fff" stroke="#2b9be0" stroke-width="1.100"/><path d="M1163.200,85.100 L1164.100,86.900 L1165.900,87.800 L1164.100,88.700 L1163.200,90.500 L1162.300,88.700 L1160.500,87.800 L1162.300,86.900 Z" fill="#fff" stroke="#2b9be0" stroke-width="1"/>
</svg>
<!-- Copilot logo -->
<svg class="a" style="left:1194px;top:76px" width="33" height="30" viewBox="0 0 33 30">
<defs><linearGradient id="cg1" x1="0.750" y1="0" x2="0.250" y2="1"><stop offset="0" stop-color="#1d4fc4"/><stop offset="0.250" stop-color="#2a9ee8"/><stop offset="0.550" stop-color="#4fc47a"/><stop offset="0.800" stop-color="#d8d548"/><stop offset="1" stop-color="#f5b53c"/></linearGradient>
<linearGradient id="cg2" x1="0.800" y1="0" x2="0.200" y2="1"><stop offset="0" stop-color="#8f63e6"/><stop offset="0.350" stop-color="#d85ab4"/><stop offset="0.650" stop-color="#f2768a"/><stop offset="0.850" stop-color="#f58a3c"/><stop offset="1" stop-color="#e5402f"/></linearGradient></defs>
<path d="M5,3.500 C6,2 8,1.500 10,1.500 H21 C23.500,1.500 25,3 25.800,5.500 L26.800,9 H22 C19.500,9 18.500,10 17.700,12.500 L15.500,19.500 C14.800,21.500 13.500,22 11.500,22 H5 C1.500,22 0.200,19.500 1,16.500 Z" fill="url(#cg1)"/>
<path d="M27.500,26 C26.500,27.500 25,28 23,28 H12 C9.500,28 8,26.500 7.200,24 L6.500,21.500 H11.500 C14,21.500 15,20.500 15.800,18 L18,11 C18.700,9 20,8.500 22,8.500 H27 C30.500,8.500 31.800,11 31,14 Z" fill="url(#cg2)"/>
<path d="M18.300,9.300 C19,8.700 20,8.500 21,8.500 L16.300,19.500 C15.800,21 14.800,21.700 13.500,21.900 C12.800,21.500 12.600,20.800 12.900,20 Z" fill="#fff" fill-opacity="0.920"/>
</svg>

<div class="t" style="left:829.5px;top:83px;font-size:21.5px;line-height:24px;-webkit-text-stroke:2.4px #fbfbfb;paint-order:stroke fill;font-family:'Liberation Serif',serif;font-style:italic;color:#252423;letter-spacing:-0.3px;">fx</div>
<div class="a" style="left:41px;top:160px;width:1397px;height:860px;background:#fff;"></div>
<div class="a" style="left:40px;top:160px;width:1px;height:860px;background:#e1dfdd;"></div>
<div class="a" style="left:1437px;top:160px;width:1px;height:860px;background:#a8a6a4;"></div>
<svg class="a" style="left:0;top:0;will-change:transform" width="1920" height="1080" viewBox="0 0 1920 1080">
<defs><clipPath id="mc"><rect x="46" y="165" width="1386" height="775"/></clipPath></defs>
<g clip-path="url(#mc)">
<rect x="46" y="165" width="1386" height="775" fill="#a1d1fd"/>
<polygon points="46,165 177.5,165 181,175 179,185 181,200 187.5,212.5 197.5,221 202,227.5 200,235 194,237.5 196,245 186,247.5 195,250 196,260 206,265 202.5,271 201,280 187.5,282.5 200,290 197.5,300 202.5,312.5 206,325 207.5,337.5 206,355 212.5,360 207.5,372.5 204,385 196,395 192.5,410 187.5,420 184,430 183.8,440 186,451 180.4,462.2 172.7,473.3 164.3,484.4 163.2,493.3 163.8,498.3 161.6,496.7 152.7,497.2 152,506 155,507 158.5,511.5 159.9,507.8 160.4,515.6 163.2,519.4 167.1,519.4 169.9,522.2 166.6,528.9 164.9,532.2 163.8,536.7 158.2,535 148.2,533.3 140.4,534.4 132.7,536.7 126,531.1 116,527.2 109.3,528.9 104.9,529.4 106.6,524.4 111,520 109.3,517.2 106,522.8 100.4,525.6 97.1,529.4 100.4,528.9 99.9,536.7 93.8,540 89.3,545.6 87.1,547.2 90.4,538.9 89.3,532.2 83.8,523.3 78.2,518.9 80.4,513.9 73.8,515.6 76,519 81.6,526.7 79.3,534.4 82.7,536.7 78.2,541.1 72.7,545 63.8,546.7 66.6,540 59.3,537.8 57.1,541.1 52.7,545 46,545.6" fill="#cee7d3"/>
<polygon points="612.5,165 1017,165 1027.5,181.25 1042.5,201.25 1046.25,212.5 1045,211.25 1037.5,206.9 1031.25,205 1025,206.9 1018.75,209.4 1012.5,207.5 1005,200 998.75,192.5 995,190 981.25,190.6 972,191.5 962.5,189.4 952.5,191.25 947.5,187.5 942.5,186.25 942.5,188 946.25,193.75 953.75,198.5 957.5,198 962.5,194.4 972.5,194 981.25,192.5 988.75,192 992.5,197.5 998.75,206.25 1007.5,213.75 1015,220.6 1017.5,220 1025,227.5 1030,233.75 1038.75,237.5 1041.25,241.9 1047.5,242.5 1051.25,251.25 1056.25,260 1060,268.75 1065,281.25 1070,291.25 1074.4,306 1073.6,326.5 1068.5,332.3 1058.3,342.5 1049.6,348.3 1040.8,358.5 1035,368.75 1027,377.5 1036.5,374.6 1043.75,379 1051,383.3 1055.4,392.8 1064.2,394.3 1072.9,394.3 1077.3,399.4 1075.8,395 1086.8,386.25 1087.5,381.9 1093.3,365.8 1099.2,359.3 1119.6,357.8 1140,358.5 1142.9,362.2 1164.8,362.2 1167.7,360.7 1186.7,364.4 1204.2,368 1218.75,376 1233.3,389.2 1247.9,403.75 1256.7,415.4 1262.5,430 1264,437.5 1262.5,452.5 1266,469 1261,482.5 1256,497.5 1249,512.5 1246,530 1242.5,550 1235,559 1225,565 1216,577.5 1206,587.5 1200,595 1201.25,603.75 1198.75,611.25 1190,618.75 1180,624.4 1170,625.6 1167.5,621.9 1163.75,618.75 1160,622 1150,625 1143.75,630 1135,632.5 1127.5,633 1120.6,634.4 1127.5,638.75 1135,637.5 1143.75,637.5 1148.75,633 1152.5,631.25 1155,635 1154.4,643.75 1153.75,653.75 1156.25,659.4 1150,668 1142.5,673.75 1133,680 1121.25,676.9 1112.5,676.25 1102.5,675.6 1111.25,680 1105,682.5 1096,683.5 1090,685 1087.5,689 1090,690.5 1095,688.5 1110,689.4 1120,691.25 1125,695 1125,698 1115,696.9 1110,702.5 1098.75,704.4 1097.5,709.4 1101.25,706.25 1112.5,711.9 1116.25,708.75 1120,711.25 1123,706 1126,706 1129,712 1131,715.5 1140,715 1148.75,720 1165,716.25 1177.5,713 1190,711.25 1208.75,710 1221.25,708.75 1223,713.75 1220,721.25 1212.5,723 1211.9,725 1214.4,735 1216,740 1216,757.5 1206,766 1190,774 1172.5,780 1162.5,789 1158,800 1159,811 1135,808 1117.5,821 1100,826 1080,831 1060,850 1040,841 1020,837.5 980,835 952.5,837.5 935,841.25 925,843.75 923,848.75 920,852.5 915,847.5 911.25,843.75 900,842 880,842 862,843 857,838 855,830 848.75,823.75 840,817.5 836.9,820 846.25,827.5 850,835 847.5,843 836.25,843 830,845 822.5,848 818.75,845 818,850 813.75,853.75 805,851.25 795,850.6 787.5,852.5 777.5,853.75 768.75,855 765,858 763.75,863.75 762.5,865 761.9,870 764.4,871.9 761.25,876.25 760,879.4 748.75,883.75 746.25,880 740,879.4 737.5,879 720,874 700,871 695,874 691,881 685,875 670,866 650,855 632.5,851 607.5,857.5 587.5,864 577.5,874 564,876 556,862.5 560,877.5 552.5,892.5 550,900 552.5,907.5 545,912.5 545,920 552.5,922.5 550,930 537.5,940 317.5,940 327.5,932.5 329,921 335,919 342.5,910 345,891 352.5,890 357.5,884 367.5,881 379,877.5 381,865 390,860 397.5,847.5 409,837.5 407.5,815 411,805 412.5,790 422.5,790 432.5,795 442.5,795 450,785 460,779 475,775 455,777.5 455,770 450,764 455,755 465,749 490,745 492.5,745 512.5,741.25 521.25,743 535,746.25 545,743.75 555,746.25 560,750 567.5,754.4 580,753.75 590,751.25 600,748.75 610,748.75 618.75,745 618.75,740 617.5,732.5 621.25,726.25 621.25,717.5 624.4,715 625,708.75 632.5,707.5 638.75,698.75 646.25,691.25 655,686.25 660,680 667.5,667.5 673.75,657.5 680,650 687.5,643.75 692.5,636.25 701.25,630 703.75,625 700,623.75 697.5,627.5 691.25,633.75 686.25,640 680,643.75 671.25,650 667.5,655 667.5,658.75 661.25,662.5 652.5,668 642.5,673.75 632.5,676.9 625,676.25 622.5,667.5 622.5,675 617.5,680 608,688 596.9,696.25 596.25,705.6 580,708 567.5,710 555,708 545,706.25 540,698.75 531.25,690 523.75,689.4 517.5,678.75 511.25,666.25 506.9,656.9 505,659.4 495,660 487.5,661.9 483.75,666.25 485.6,670.6 477.5,670.6 468.75,669.4 462.5,672.5 463,675.6 460,673.75 452.5,676.25 443.75,671.25 445,666.25 442.5,661.25 447.5,660 451.25,653 451.25,658 462.5,657.5 470,652.5 474.4,651.9 475,647.5 476.9,640.6 473,645 473.75,648.75 470,649.4 465,650.6 460,646.25 456.25,645 447.5,646.25 446.25,648 442.5,647.5 436.25,641.25 433,635 438.75,637.5 442.5,636.9 441.9,633.75 433.75,633 433.75,630 435,622.5 439.4,618.75 433.75,621.25 432.5,626.25 427.5,628 425,625 421.25,621.25 421.25,626.25 425.6,630 425,632.5 407.5,632.5 393.75,635 389.4,638.75 390.6,642.5 387.5,650.6 382.5,651.25 377.5,654.4 367.5,653 361.9,658.75 357.5,663 348.75,660.6 340,658 341.9,655 340,649.4 332.5,645 326.9,642.5 324.4,645 323.75,640 320,636.25 313.75,633 320.6,633.75 321.25,630 326.25,626.25 331.25,626.25 334.4,623.75 334.4,618.75 333,611.25 330,605.6 321.25,603.75 312.5,603.75 305.6,605.6 306.25,598.75 308.75,595.6 317.5,591.25 322.5,586.9 328.75,585 336.9,582.5 338,576.25 336.9,572.5 340,569.4 349.4,570.6 349.4,574.4 352.5,576.25 358,572.5 361.9,568 363.75,571.25 372.5,571.25 370,565.6 375,563 378.75,560 382.5,557.5 392.5,547.5 415,545 435,529 450,520 462.5,505 470,487.5 476,470 477.5,460 492.5,451 475,455 467.5,440 475.8,425 481.7,418.3 491.7,408.3 483.3,413.3 476.7,414.2 470,403.3 464.2,395 467.5,386.7 465,377.5 471.7,375 479.2,366.7 470,370.8 463.3,372.5 453.3,370.8 440,373.3 428.3,377.5 420,385 415,393.3 417.5,398.3 411.7,401.7 408.3,395.8 400,393.3 391.7,396.7 385,400.8 380.8,398.3 385.8,391.7 386.7,385.8 395,380 398.3,372.5 406.7,367.5 415,365 423.3,355.8 428.3,353.3 435,345.8 438.3,338.3 439.2,325.8 443.3,323.3 451.7,315 456.7,306.7 465,300.8 473.3,300.8 485,295 496.7,290.8 505.8,286.7 505,280.8 501.7,275.8 506.7,277.5 507.5,278.75 515,279.4 522.5,285.6 537.5,286.9 552.5,281.25 562.5,277.5 576.25,272.5 580,277.5 590,285 600,293.75 610,301.25 613,302.5 608.75,290 603.75,280 595,268.75 598,262 606,257 614,258 619.4,268.75 625,276.25 631.25,282.5 638.75,286.9 647.5,284.4 653,281.9 651.9,276.25 656.25,273 665.6,270 656,271.5 651,276 649,279 643.75,277.5 637.5,278.75 630,276.25 623,270 620,262 618.75,253.75 617.5,248.75 612.5,240 611,237.5 606,229 607.5,222.5 615,210 622.5,199 627.5,190 632.5,186 620,184 614,179" fill="#cee7d3"/>
<polygon points="406.7,260.8 413.3,260 420,257.5 426.7,255.8 436.7,257.5 445,259.2 446.7,266.7 451.7,271.7 455.8,280.8 456.7,285 466.7,280.8 477.5,282.5 473.3,290 466.7,296.7 456.7,304.2 453.3,310.8 445,318.3 436.7,321.7 428.3,317.5 431.7,310 427.5,314.2 423.3,315.8 416.7,309.2 415.8,303.3 410.8,296.7 405.8,290 410,283.3 405.8,278.3 409.2,268.3" fill="#cee7d3"/>
<polygon points="390,282.5 395,280 403.3,284.2 401.7,289.2 407.5,295 402.5,297.5 400,290 392.5,287.5" fill="#cee7d3"/>
<polygon points="814.4,865 818,859.4 827.5,855.6 833.75,853.75 833,856.9 840,853.75 838.75,850.6 846.25,846.25 852.5,844.4 857.5,848.75 865,851.25 875,853 877.5,857.5 881.25,860.6 875,865 868.75,870 866.9,877.5 860,881.9 850,883.75 843.75,877.5 836.25,871.9 827.5,867.5 822.5,865" fill="#cee7d3"/>
<polygon points="1127.5,697.5 1137.5,700.6 1147.5,703 1155,711.25 1152.5,714.4 1142.5,713 1132.5,713 1130,710 1126.25,703.75" fill="#cee7d3"/>
<polygon points="692.5,882 699,889 695,896 693,890" fill="#cee7d3"/>
<polygon points="1432,737.5 1404.8,755 1384.4,767.2 1364,777.4 1347.7,781.5 1335,785 1323.3,787.6 1313.1,791.6 1297.5,795 1282.6,797.8 1272.5,801.5 1262.2,805.9 1257,810 1250,819 1241,824 1244,837.5 1242.5,852.5 1239.5,860 1241,875 1241,890 1244,895 1241,905 1239.5,917.5 1236,940 1432,940" fill="#cee7d3"/>
<polygon points="392,751 393.5,751 394,759 392.5,759" fill="#cee7d3"/>
<polygon points="306.2,632 309.5,632 310,633.5 307,634" fill="#cee7d3"/>
<polygon points="134,332 140,324 146,312 142,322 148,324 146,330 140,334" fill="#a1d1fd"/>
<polygon points="744.4,860 747.5,855 753.75,855.6 760,854.4 765,858 764,863 762.5,862.5 758.75,865.6 752.5,861.25 750,863 747.5,860.6" fill="#a1d1fd"/>
<polygon points="380,940 388,937.5 397,935.3 410,934 419.6,932.5 431,929.5 445,931 452,934 470,935.5 485,935 498,937 503,940" fill="#a1d1fd"/>
<polygon points="932,427 944,426 945,430 938,432 933,434" fill="#a1d1fd"/>
<polygon points="867.5,829 870,826 877.5,826.5 878,842.5 868,842.5" fill="#a1d1fd"/>
<polygon points="885,829 890,827 905,827 911,829 908,843.5 888,842.5" fill="#a1d1fd"/>
<polyline points="520,466 530,474 545,476 560,470 562.5,460 572.5,462.5 587.5,452.5 597.5,440 607.5,420 612.5,410 625,409 640,412.5 647.5,407.5 650,415 657.5,415 660,422.5 667.5,431 685,434 697.5,440 700,457.5 705,472.5 712.5,492.5 720,502.5 719,515 724,520 722.5,530 726,540 722.5,550 727.5,562.5 734,575 726,587.5 720,592.5 717.5,607.5 715,612.5 709,610 706,620 697.5,616 695,620 702.5,625" fill="none" stroke="#8dbcf0" stroke-width="1" stroke-linejoin="round"/>
<polyline points="751.25,643.1 757,650 764.4,655.3 779.4,653.4 796.25,644 815,641.25 828,639.4 839.4,638.4 845,630 848.75,621.6 855,628 860,637.5 861,645 852.5,649.7 853.4,652.5 863.75,650.6 871.25,656.25 876,660 874,669.4 871.25,675 875,684.4 884.4,687.2 890,691.9 899.4,693.2 907.8,684.4 905,675.9 907.8,671.25 912.5,675 927.5,668.4 932.2,671.25 932.2,680.6 936.9,687.2 946.25,687.2 950,693.75 957.5,701.25 962.2,709.7 967.8,709.7 974.4,704 981.9,707.8 985.6,703 982.8,697.5 985.6,691.9 990,688" fill="none" stroke="#8dbcf0" stroke-width="1" stroke-linejoin="round"/>
<polyline points="990,688 1000,690 1010,684 1025,686 1037.5,682.5 1040,682.5 1043.75,681.25 1050,683.75 1052.5,687.5 1058.75,690 1065,694.4 1069.4,691.9 1072.5,695.6 1078.75,696.25 1086.25,693.75 1087.5,690" fill="none" stroke="#8dbcf0" stroke-width="1" stroke-linejoin="round"/>
<polyline points="473.3,295 456.7,306.7 448.3,316.7 440,325" fill="none" stroke="#a1d1fd" stroke-width="1.4" stroke-linejoin="round" stroke-linecap="round"/>
<polyline points="505.8,286 510.8,291.7 508.3,295 510,300" fill="none" stroke="#a1d1fd" stroke-width="1.3" stroke-linejoin="round" stroke-linecap="round"/>
<polyline points="322,641 326,640 337.5,639 346,641 355,641 364,639 370,636.5" fill="none" stroke="#a1d1fd" stroke-width="2.6" stroke-linejoin="round" stroke-linecap="round"/>
<polyline points="333,643 342,646" fill="none" stroke="#a1d1fd" stroke-width="2.4" stroke-linejoin="round" stroke-linecap="round"/>
<polyline points="351,645.5 358,645" fill="none" stroke="#a1d1fd" stroke-width="2.0" stroke-linejoin="round" stroke-linecap="round"/>
<polyline points="364,639 362.5,630 360,625 366,623 371,621.5" fill="none" stroke="#a1d1fd" stroke-width="1.3" stroke-linejoin="round" stroke-linecap="round"/>
<polyline points="370,636.5 371,640 368,642" fill="none" stroke="#a1d1fd" stroke-width="1.1" stroke-linejoin="round" stroke-linecap="round"/>
<polyline points="1163.75,618.75 1160,613.75 1157.5,607.5" fill="none" stroke="#a1d1fd" stroke-width="1.6" stroke-linejoin="round" stroke-linecap="round"/>
<polyline points="1156.25,659 1146.25,658.75 1135,657.5 1127.5,654.4 1115,655 1106.9,656.25" fill="none" stroke="#a1d1fd" stroke-width="2.0" stroke-linejoin="round" stroke-linecap="round"/>
<polyline points="1150,664 1143.75,664 1137.5,665.6 1125,668" fill="none" stroke="#a1d1fd" stroke-width="1.3" stroke-linejoin="round" stroke-linecap="round"/>
<polyline points="1200,587.5 1192.5,586 1185,584 1177.5,587 1170.5,586" fill="none" stroke="#a1d1fd" stroke-width="2.0" stroke-linejoin="round" stroke-linecap="round"/>
<polyline points="1200,586 1196,577.5 1190,574 1185,569.5" fill="none" stroke="#a1d1fd" stroke-width="1.6" stroke-linejoin="round" stroke-linecap="round"/>
<polyline points="1215,577.5 1212,565 1207,560 1205,556" fill="none" stroke="#a1d1fd" stroke-width="1.4" stroke-linejoin="round" stroke-linecap="round"/>
<polyline points="1190,598 1196,603 1200,600" fill="none" stroke="#a1d1fd" stroke-width="2.2" stroke-linejoin="round" stroke-linecap="round"/>
<polyline points="1087.5,690 1086.25,693.75 1078.75,696.25 1072.5,695.6" fill="none" stroke="#a1d1fd" stroke-width="1.4" stroke-linejoin="round" stroke-linecap="round"/>
<polyline points="455,777.5 465,776.5 475,775" fill="none" stroke="#a1d1fd" stroke-width="1.6" stroke-linejoin="round" stroke-linecap="round"/>
<polyline points="456,779 457,790 459,795" fill="none" stroke="#a1d1fd" stroke-width="1.2" stroke-linejoin="round" stroke-linecap="round"/>
<polyline points="357.5,884 358,893 368,895" fill="none" stroke="#a1d1fd" stroke-width="1.4" stroke-linejoin="round" stroke-linecap="round"/>
<polyline points="455,940 456,930 452,920 458,912 455,908" fill="none" stroke="#a1d1fd" stroke-width="1.3" stroke-linejoin="round" stroke-linecap="round"/>
<polyline points="80.4,513.9 73.8,515.6 69,521 64,519 56,513.3 49.3,521.1 46,521.7" fill="none" stroke="#a1d1fd" stroke-width="1.2" stroke-linejoin="round" stroke-linecap="round"/>
<polyline points="152.7,499 150,497 148.2,495.5 148.8,492.2" fill="none" stroke="#a1d1fd" stroke-width="1.5" stroke-linejoin="round" stroke-linecap="round"/>
<polyline points="150,497 143.8,497.2" fill="none" stroke="#a1d1fd" stroke-width="1.2" stroke-linejoin="round" stroke-linecap="round"/>
<text class="ml" x="797.5" y="177" textLength="42.0" lengthAdjust="spacing">Leeds</text>
<text class="ml" x="967.5" y="189" textLength="28.8" lengthAdjust="spacing">Hull</text>
<text class="ml" x="680.5" y="249" textLength="85.3" lengthAdjust="spacing">Manchester</text>
<text class="ml" x="588.5" y="266" textLength="66.8" lengthAdjust="spacing">Liverpool</text>
<text class="ml" x="154.7" y="279" textLength="47.3" lengthAdjust="spacing">Dublin</text>
<text class="ml" x="678.5" y="354" textLength="107.3" lengthAdjust="spacing">Stoke-on-Trent</text>
<text class="ml" x="828" y="368" textLength="87.3" lengthAdjust="spacing">Nottingham</text>
<text class="ml" x="1173" y="441" textLength="60.3" lengthAdjust="spacing">Norwich</text>
<text class="ml" x="944.7" y="454" textLength="100.3" lengthAdjust="spacing">Peterborough</text>
<text class="ml" x="724.2" y="475" textLength="90.3" lengthAdjust="spacing">Birmingham</text>
<text class="ml" x="1003.5" y="535" textLength="80.3" lengthAdjust="spacing">Cambridge</text>
<text class="ml" x="832.2" y="635" textLength="49.8" lengthAdjust="spacing">Oxford</text>
<text class="ml" x="983" y="689" textLength="54.8" lengthAdjust="spacing">London</text>
<text class="ml" x="571.7" y="694" textLength="50.3" lengthAdjust="spacing">Cardiff</text>
<text class="ml" x="691" y="716" textLength="33.5" lengthAdjust="spacing">Bath</text>
<text class="ml" x="837.2" y="842" textLength="85.5" lengthAdjust="spacing">Portsmouth</text>
<text class="ml" x="977.5" y="837" textLength="62.8" lengthAdjust="spacing">Brighton</text>
<text class="ml" x="526.7" y="858" textLength="45.8" lengthAdjust="spacing">Exeter</text>
<text class="ml" x="431" y="933" textLength="69.3" lengthAdjust="spacing">Plymouth</text>
<text class="ml" x="47" y="437" textLength="26.8" lengthAdjust="spacing">nny</text>
<text class="ml" x="1429.5" y="877" textLength="31.3" lengthAdjust="spacing">Lille</text>
<rect x="976" y="918" width="456" height="22" fill="#fff" fill-opacity="0.5"/>
</g>
</svg>
<div class="t" style="left:981.00px;top:922px;font-size:12px;line-height:14px;color:#333;letter-spacing:0.516px;">Icon Map Slicer | © Tekantis © OpenMapTiles © OpenStreetMap contributors</div>
<div class="a" style="left:1356px;top:165px;width:24px;height:19px;background:#fff;"></div>
<div class="a" style="left:1384px;top:165px;width:24px;height:19px;background:#fff;"></div>
<div class="a" style="left:1412px;top:165px;width:20px;height:19px;background:#fff;"></div>
<svg class="a" style="left:1358px;top:164px" width="80" height="22" viewBox="1358 164 80 22" fill="none" stroke="#3b3a39" stroke-width="1">
<path d="M1360.500,166.500 H1375.500 L1370,172.500 V178 H1366 V172.500 Z"/>
<path d="M1393,168.500 H1389.500 V179.500 H1402.500 V176"/><path d="M1396.500,168.500 H1402.500 V174.500 M1402,169 L1396,175"/>
<circle cx="1417.700" cy="172.900" r="1.200" fill="#3b3a39" stroke="none"/><circle cx="1424" cy="172.900" r="1.200" fill="#3b3a39" stroke="none"/><circle cx="1430.300" cy="172.900" r="1.200" fill="#3b3a39" stroke="none"/>
</svg>
<svg class="a" style="left:1325px;top:173px" width="71" height="69" viewBox="0 0 71 69">
<defs><clipPath id="tc"><rect x="0.500" y="0.500" width="70" height="68" rx="4"/></clipPath></defs>
<g clip-path="url(#tc)">
<rect width="71" height="69" fill="#d6dfbd"/>
<path d="M0,0 H18.300 C14,3 11.500,6 10.800,8 C9,10.500 8.300,13 8.300,15 C8.500,18 8.200,21 7.900,23.500 C7.500,26 6.500,28 5.800,30 C5.600,32 6.500,34 6.200,36 C5.500,38 4.500,39 3.300,40 L0,44.500 Z" fill="#96c2e4"/>
<path d="M49.200,0 H71 V69 H13.300 Z" fill="#e1d6c1"/>
<path d="M49.200,0 H66 L29.500,69 H13.300 Z" fill="#ece8dc"/>
<path d="M50.500,18 L71,24.500 V31 L48,23.500 Z" fill="#f4f2ec"/>
<path d="M55.200,0 H61.200 L26.800,69 H20 Z" fill="#fff"/>
<path d="M56.500,42 L71,46 V56 L53,51 Z" fill="#ebe6d6"/>
<path d="M24,65.500 L45,68.500 V69 H22 Z" fill="#f4f2ec"/>
<g fill="none" stroke="#fff" stroke-width="1" stroke-dasharray="1.300 1.300">
<path d="M29.200,3.300 L1.700,58.300"/><path d="M52,0 L16.800,69" stroke-opacity="0.850"/><path d="M63.500,0 L28,69" stroke-opacity="0.850"/>
<path d="M51,19.500 L71,26" stroke-opacity="0.800"/><path d="M49.500,22.500 L71,29.500" stroke-opacity="0.800"/></g>
</g>
<rect x="0.500" y="0.500" width="70" height="68" rx="4" fill="none" stroke="#5a5a5a" stroke-width="1"/>
</svg>
<svg class="a" style="left:42px;top:944px" width="1395" height="4"><path d="M0,1.700 H1394" stroke="#3b3a39" stroke-width="1.400" stroke-dasharray="1.300 1.500" fill="none"/></svg>
<div class="a" style="left:42px;top:161px;width:8px;height:2px;background:#8a8886;"></div><div class="a" style="left:42px;top:161px;width:2px;height:8px;background:#8a8886;"></div>
<div class="a" style="left:42px;top:942px;width:8px;height:2px;background:#8a8886;"></div><div class="a" style="left:42px;top:936px;width:2px;height:8px;background:#8a8886;"></div>
<div class="a" style="left:1428px;top:942px;width:8px;height:2px;background:#8a8886;"></div><div class="a" style="left:1434px;top:936px;width:2px;height:8px;background:#8a8886;"></div>
<div class="a" style="left:733px;top:161px;width:12px;height:2px;background:#8a8886;"></div>
<div class="a" style="left:733px;top:942px;width:12px;height:2px;background:#8a8886;"></div>
<div class="a" style="left:42px;top:547px;width:2px;height:12px;background:#8a8886;"></div>
<div class="a" style="left:1435px;top:547px;width:2px;height:12px;background:#8a8886;"></div>
<div class="a" style="left:1438px;top:161px;width:32px;height:859px;background:#fff;"></div>
<div class="a" style="left:1438px;top:1020px;width:33px;height:35px;background:#f3f2f1;"></div>
<div class="a" style="left:1470px;top:161px;width:1px;height:895px;background:#e1dfdd;"></div>
<svg class="a" style="left:1440px;top:165px" width="30" height="60" viewBox="1440 165 30 60" fill="none" stroke="#252423" stroke-width="1.300">
<path d="M1454,173.500 L1448.500,179 L1454,184.500 M1460.500,173.500 L1455,179 L1460.500,184.500"/>
<path d="M1461.300,201.900 V213.100 L1456.200,208.700 L1450.400,208.200 V206.800 L1456.200,206.300 Z" stroke-width="1.200" stroke-linejoin="round"/></svg>
<div class="t" style="left:1445px;top:222px;width:18px;height:46px;writing-mode:vertical-rl;font-size:15px;line-height:18px;color:#252423;letter-spacing:0.25px;">Filters</div>
<div class="a" style="left:1471px;top:161px;width:268px;height:895px;background:#f3f2f1;"></div>
<div class="a" style="left:1739px;top:161px;width:1px;height:895px;background:#e1dfdd;"></div>
<div class="t" style="left:1479.00px;top:171px;font-size:16px;line-height:17px;color:#252423;letter-spacing:0.069px;-webkit-text-stroke:0.35px #252423;">Visualizations</div>
<svg class="a" style="left:1717.5px;top:172px" width="16" height="14" fill="none" stroke="#252423" stroke-width="1.300"><path d="M1.500,1.500 L7,7 L1.500,12.500 M8,1.500 L13.500,7 L8,12.500"/></svg>
<div class="t" style="left:1479.00px;top:199px;font-size:12px;line-height:14px;color:#252423;letter-spacing:0.076px;-webkit-text-stroke:0.35px #252423;">Format visual</div>
<div class="a" style="left:1545px;top:217px;width:32px;height:32px;background:#d2d0ce;border-radius:2px;"></div>
<svg class="a" style="left:1475px;top:215px" width="180" height="50" viewBox="1475 215 180 50" fill="none" stroke="#252423" stroke-width="1.200">
<path d="M1483,221.500 H1502"/><rect x="1483.600" y="226.800" width="23" height="7" stroke-dasharray="2 1.300"/><rect x="1483.600" y="237.400" width="23" height="7.200" stroke-dasharray="2 1.300"/>
<path d="M1551.700,240 V231.200 H1557.500 M1564.500,228 H1570.300 V232.500"/><rect x="1557.500" y="222.500" width="7" height="15" fill="#117865" stroke="none"/>
<path d="M1573.300,229.200 C1574.200,230 1574,231.200 1573.300,232 L1564,241.800 L1561,239 L1571,229.500 C1571.700,228.800 1572.600,228.600 1573.300,229.200 Z" fill="#d2d0ce" stroke="#252423" stroke-width="1" stroke-linejoin="round"/>
<path d="M1561,239 C1558.500,238.800 1557,240.500 1557,242 C1557,243.500 1556,244.300 1554.800,244.500 C1558,246.200 1563,245.500 1564,241.800 Z" fill="#117865" stroke="#252423" stroke-width="0.800"/>
<circle cx="1625.300" cy="231.200" r="9.700"/><path d="M1632.500,238.500 L1638.800,244.600" stroke-width="2"/><path d="M1616,232.500 L1621,228 L1624.500,231 L1631,224.500" stroke-width="1"/><path d="M1619,234 V240 M1622.500,233 V240.500 M1626,233 V240.500 M1629.500,231 V239" stroke-width="1"/>
<path d="M1471,261.500 H1553 L1561,253.500 L1569,261.500 H1650" stroke="#a19f9d" stroke-width="1"/></svg>
<div class="a" style="left:1479px;top:270px;width:250px;height:25px;border:1px solid #605e5c;border-radius:2px;background:#f3f2f1;"></div>
<svg class="a" style="left:1485px;top:274px" width="18" height="18" viewBox="0 0 18 18" fill="none" stroke="#605e5c" stroke-width="1.100"><circle cx="10.500" cy="7" r="4.300"/><path d="M7.500,10.200 L2.500,15.500"/></svg>
<div class="t" style="left:1508.00px;top:276px;font-size:14px;line-height:16px;color:#605e5c;letter-spacing:-0.560px;">Search</div>
<div class="t" style="left:1483.00px;top:315px;font-size:14px;line-height:16px;color:#252423;letter-spacing:0.020px;-webkit-text-stroke:0.35px #252423;">Visual</div>
<div class="t" style="left:1537.00px;top:315px;font-size:14px;line-height:16px;color:#252423;letter-spacing:-0.330px;">General</div>
<div class="a" style="left:1483px;top:336px;width:38px;height:2px;background:#117865;"></div>
<svg class="a" style="left:1705px;top:318px" width="20" height="10"><circle cx="3" cy="5" r="1" fill="#252423"/><circle cx="9.500" cy="5" r="1" fill="#252423"/><circle cx="16" cy="5" r="1" fill="#252423"/></svg>
<svg class="a" style="left:1478.5px;top:368px" width="14" height="10" fill="none" stroke="#252423" stroke-width="1.300"><path d="M1.500,2 L7,7.500 L12.500,2"/></svg>
<div class="t" style="left:1495.00px;top:366px;font-size:12px;line-height:14px;color:#252423;letter-spacing:-0.025px;-webkit-text-stroke:0.35px #252423;">Background Layer</div>
<div class="a" style="left:1471px;top:392px;width:268px;height:656px;background:#e1dfdd;"></div>
<div class="a" style="left:1471px;top:1047px;width:268px;height:9px;background:#faf9f8;"></div>
<div class="a" style="left:1733px;top:352px;width:6px;height:448px;background:#8a8886;border-radius:3px;"></div>
<div class="a" style="left:1479px;top:400px;width:252px;height:560px;background:#f3f2f1;border-radius:6px;box-shadow:0 1px 2px rgba(0,0,0,0.12);"></div>
<svg class="a" style="left:1486.5px;top:416px" width="14" height="10" fill="none" stroke="#252423" stroke-width="1.300"><path d="M1.500,2 L7,7.500 L12.500,2"/></svg>
<div class="t" style="left:1503.00px;top:414px;font-size:12px;line-height:14px;color:#252423;letter-spacing:-0.136px;-webkit-text-stroke:0.35px #252423;">Style</div>
<div class="t" style="left:1487.00px;top:442px;font-size:12px;line-height:14px;color:#252423;letter-spacing:-0.151px;">Map Style</div>
<div class="a" style="left:1487px;top:460px;width:234px;height:22px;border:1px solid #8a8886;border-radius:2px;background:#fff;"></div><div class="t" style="left:1496.00px;top:466px;font-size:12px;line-height:14px;color:#605e5c;letter-spacing:-0.213px;">Standard</div><svg class="a" style="left:1703px;top:468px" width="14" height="9" fill="none" stroke="#484644" stroke-width="1"><path d="M1,1.500 L7,7.500 L13,1.500"/></svg>
<div class="t" style="left:1487.00px;top:494px;font-size:12px;line-height:14px;color:#252423;letter-spacing:-0.236px;">Language</div>
<svg class="a" style="left:1710px;top:494px" width="14" height="14" fill="none" stroke="#252423" stroke-width="0.900"><circle cx="6.500" cy="6.500" r="5.300"/><path d="M6.500,5.800 V9.500 M6.500,3.500 V4.500" stroke-width="1.100"/></svg>
<div class="a" style="left:1487px;top:512px;width:206px;height:22px;border:1px solid #8a8886;border-radius:2px;background:#fff;"></div><div class="t" style="left:1496.00px;top:518px;font-size:12px;line-height:14px;color:#605e5c;letter-spacing:-0.265px;">English</div><svg class="a" style="left:1675px;top:520px" width="14" height="9" fill="none" stroke="#484644" stroke-width="1"><path d="M1,1.500 L7,7.500 L13,1.500"/></svg>
<div class="a" style="left:1699px;top:512px;width:22px;height:22px;border:1px solid #8a8886;border-radius:2px;background:#fff;"></div>
<div class="t" style="left:1703.70px;top:514px;font-size:18px;line-height:20px;color:#252423;letter-spacing:0.505px;font-style:italic;font-family:'Liberation Serif',serif;">fx</div>
<div class="t" style="left:1487.00px;top:546px;font-size:12px;line-height:14px;color:#252423;letter-spacing:-0.074px;">Note: Labels can be added over the map</div>
<div class="t" style="left:1487.00px;top:562px;font-size:12px;line-height:14px;color:#252423;letter-spacing:-0.043px;">features by enabling Map Labels in the</div>
<div class="t" style="left:1487.00px;top:578px;font-size:12px;line-height:14px;color:#252423;letter-spacing:-0.208px;">Overlays / Reference Layers section. Custom</div>
<div class="t" style="left:1487.00px;top:594px;font-size:12px;line-height:14px;color:#252423;letter-spacing:-0.008px;">labels allow the language and colors to</div>
<div class="t" style="left:1487.00px;top:610px;font-size:12px;line-height:14px;color:#252423;letter-spacing:-0.120px;">specified.</div>
<div class="t" style="left:1487.00px;top:634px;font-size:12px;line-height:14px;color:#252423;letter-spacing:-0.140px;">Extrude Buildings</div>
<div class="a" style="left:1691px;top:633px;box-sizing:border-box;width:32px;height:16px;border:1px solid #605e5c;background:#fff;border-radius:8px;"></div><div class="a" style="left:1696px;top:637px;width:8px;height:8px;background:#605e5c;border-radius:4px;"></div><div class="t" style="left:1706.20px;top:635px;font-size:11px;line-height:12px;color:#605e5c;letter-spacing:-0.724px;">Off</div>
<div class="t" style="left:1487.00px;top:662px;font-size:12px;line-height:14px;color:#252423;letter-spacing:-0.338px;">Show Labels</div>
<div class="a" style="left:1691px;top:661px;width:32px;height:16px;background:#117865;border-radius:8px;"></div><div class="a" style="left:1710px;top:665px;width:8px;height:8px;background:#fff;border-radius:4px;"></div><div class="t" style="left:1695.50px;top:664px;font-size:10px;line-height:11px;color:#fff;letter-spacing:-0.920px;-webkit-text-stroke:0.35px #fff;">On</div>
<div class="t" style="left:1487.00px;top:690px;font-size:12px;line-height:14px;color:#252423;letter-spacing:-0.082px;">Show Transportation</div>
<div class="a" style="left:1691px;top:689px;box-sizing:border-box;width:32px;height:16px;border:1px solid #605e5c;background:#fff;border-radius:8px;"></div><div class="a" style="left:1696px;top:693px;width:8px;height:8px;background:#605e5c;border-radius:4px;"></div><div class="t" style="left:1706.20px;top:691px;font-size:11px;line-height:12px;color:#605e5c;letter-spacing:-0.724px;">Off</div>
<div class="t" style="left:1487.00px;top:718px;font-size:12px;line-height:14px;color:#252423;letter-spacing:-0.204px;">Show Boundaries</div>
<div class="a" style="left:1691px;top:717px;box-sizing:border-box;width:32px;height:16px;border:1px solid #605e5c;background:#fff;border-radius:8px;"></div><div class="a" style="left:1696px;top:721px;width:8px;height:8px;background:#605e5c;border-radius:4px;"></div><div class="t" style="left:1706.20px;top:719px;font-size:11px;line-height:12px;color:#605e5c;letter-spacing:-0.724px;">Off</div>
<div class="t" style="left:1487.00px;top:746px;font-size:12px;line-height:14px;color:#252423;letter-spacing:-0.111px;">Show Buildings</div>
<div class="a" style="left:1691px;top:745px;width:32px;height:16px;background:#117865;border-radius:8px;"></div><div class="a" style="left:1710px;top:749px;width:8px;height:8px;background:#fff;border-radius:4px;"></div><div class="t" style="left:1695.50px;top:748px;font-size:10px;line-height:11px;color:#fff;letter-spacing:-0.920px;-webkit-text-stroke:0.35px #fff;">On</div>
<div class="t" style="left:1487.00px;top:774px;font-size:12px;line-height:14px;color:#252423;letter-spacing:-0.447px;">Show POIs</div>
<div class="a" style="left:1691px;top:773px;width:32px;height:16px;background:#117865;border-radius:8px;"></div><div class="a" style="left:1710px;top:777px;width:8px;height:8px;background:#fff;border-radius:4px;"></div><div class="t" style="left:1695.50px;top:776px;font-size:10px;line-height:11px;color:#fff;letter-spacing:-0.920px;-webkit-text-stroke:0.35px #fff;">On</div>
<div class="t" style="left:1487.00px;top:802px;font-size:12px;line-height:14px;color:#252423;letter-spacing:-0.209px;">Show Land Use &amp; Land Cover</div>
<div class="a" style="left:1691px;top:801px;box-sizing:border-box;width:32px;height:16px;border:1.4px solid #201f1e;background:#fff;border-radius:8px;"></div><div class="a" style="left:1696px;top:805px;width:8px;height:8px;background:#201f1e;border-radius:4px;"></div><div class="t" style="left:1706.20px;top:803px;font-size:11px;line-height:12px;color:#201f1e;letter-spacing:-0.724px;">Off</div>
<div class="t" style="left:1487.00px;top:830px;font-size:12px;line-height:14px;color:#252423;letter-spacing:0.016px;">Override Formatting</div>
<div class="a" style="left:1691px;top:829px;width:32px;height:16px;background:#117865;border-radius:8px;"></div><div class="a" style="left:1710px;top:833px;width:8px;height:8px;background:#fff;border-radius:4px;"></div><div class="t" style="left:1695.50px;top:832px;font-size:10px;line-height:11px;color:#fff;letter-spacing:-0.920px;-webkit-text-stroke:0.35px #fff;">On</div>
<div class="t" style="left:1487.00px;top:858px;font-size:12px;line-height:14px;color:#252423;letter-spacing:-0.052px;">Water Color</div>
<div class="a" style="left:1487px;top:876px;width:50px;height:22px;border:1px solid #8a8886;border-radius:2px;background:#fff;"></div><div class="a" style="left:1492px;top:880px;width:14px;height:14px;border:1px solid #8a8886;background:#a1d1fd;"></div><svg class="a" style="left:1520px;top:884px" width="14" height="9" fill="none" stroke="#252423" stroke-width="1.100"><path d="M1.500,1.500 L7,7 L12.500,1.500"/></svg>
<div class="t" style="left:1487.00px;top:910px;font-size:12px;line-height:14px;color:#252423;letter-spacing:-0.066px;">Background Color</div>
<div class="a" style="left:1487px;top:928px;width:50px;height:22px;border:1px solid #8a8886;border-radius:2px;background:#fff;"></div><div class="a" style="left:1492px;top:932px;width:14px;height:14px;border:1px solid #8a8886;background:#cee7d3;"></div><svg class="a" style="left:1520px;top:936px" width="14" height="9" fill="none" stroke="#252423" stroke-width="1.100"><path d="M1.500,1.500 L7,7 L12.500,1.500"/></svg>
<div class="a" style="left:1479px;top:968px;width:252px;height:40px;background:#f3f2f1;border-radius:6px;box-shadow:0 1px 2px rgba(0,0,0,0.12);"></div>
<svg class="a" style="left:1488px;top:981.5px" width="10" height="14" fill="none" stroke="#252423" stroke-width="1.300"><path d="M2,1.500 L7.500,7 L2,12.500"/></svg>
<div class="t" style="left:1503.00px;top:982px;font-size:12px;line-height:14px;color:#252423;letter-spacing:0.164px;-webkit-text-stroke:0.35px #252423;">Hill Shading</div>
<div class="a" style="left:1691px;top:981px;box-sizing:border-box;width:32px;height:16px;border:1px solid #605e5c;background:#fff;border-radius:8px;"></div><div class="a" style="left:1696px;top:985px;width:8px;height:8px;background:#605e5c;border-radius:4px;"></div><div class="t" style="left:1706.20px;top:983px;font-size:11px;line-height:12px;color:#605e5c;letter-spacing:-0.724px;">Off</div>
<div class="a" style="left:1479px;top:1016px;width:252px;height:31px;background:#f3f2f1;border-radius:6px 6px 0 0;"></div>
<svg class="a" style="left:1488px;top:1029.5px" width="10" height="14" fill="none" stroke="#252423" stroke-width="1.300"><path d="M2,1.500 L7.500,7 L2,12.500"/></svg>
<div class="t" style="left:1503.00px;top:1030px;font-size:12px;line-height:14px;color:#252423;letter-spacing:0.086px;-webkit-text-stroke:0.35px #252423;">3D Terrain</div>
<div class="a" style="left:1691px;top:1029px;box-sizing:border-box;width:32px;height:16px;border:1px solid #605e5c;background:#fff;border-radius:8px;"></div><div class="a" style="left:1696px;top:1033px;width:8px;height:8px;background:#605e5c;border-radius:4px;"></div><div class="t" style="left:1706.20px;top:1031px;font-size:11px;line-height:12px;color:#605e5c;letter-spacing:-0.724px;">Off</div>
<div class="a" style="left:1740px;top:161px;width:180px;height:895px;background:#f3f2f1;"></div>
<div class="t" style="left:1748.00px;top:171px;font-size:16px;line-height:17px;color:#252423;letter-spacing:0.051px;-webkit-text-stroke:0.35px #252423;">Data</div>
<svg class="a" style="left:1897.5px;top:172px" width="16" height="14" fill="none" stroke="#252423" stroke-width="1.300"><path d="M1.500,1.500 L7,7 L1.500,12.500 M8,1.500 L13.500,7 L8,12.500"/></svg>
<div class="a" style="left:1744px;top:205px;width:170px;height:22px;background:#fff;border:1px solid #d2d0ce;border-bottom-color:#8a8886;border-radius:4px;"></div>
<svg class="a" style="left:1755px;top:208px" width="18" height="18" viewBox="0 0 18 18" fill="none" stroke="#605e5c" stroke-width="1.100"><circle cx="7.500" cy="7" r="4.800"/><path d="M11,10.500 L15.500,15"/></svg>
<div class="t" style="left:1778.00px;top:210px;font-size:14px;line-height:16px;color:#605e5c;letter-spacing:-0.560px;">Search</div>
<svg class="a" style="left:1752px;top:245px" width="14" height="10" fill="none" stroke="#605e5c" stroke-width="1"><path d="M1.500,2 L7,7.500 L12.500,2"/></svg>
<svg class="a" style="left:1767px;top:243px" width="20" height="20" viewBox="0 0 20 20" fill="none" stroke="#252423" stroke-width="1"><rect x="2.500" y="1.500" width="11" height="11" rx="1.500"/><path d="M2.500,5.500 H13.500 M2.500,9 H13.500 M6.500,1.500 V12.500 M10,1.500 V12.500"/><circle cx="13.500" cy="13.700" r="5.600" fill="#117865" stroke="#f3f2f1" stroke-width="0.800"/><path d="M11.300,13.500 L13,15.200 L15.800,12" stroke="#fff" stroke-width="1.100"/></svg>
<div class="t" style="left:1787.00px;top:244px;font-size:12px;line-height:14px;color:#252423;letter-spacing:-0.279px;">styles</div>
<div class="a" style="left:1784px;top:268px;width:12px;height:12px;background:#117865;border-radius:2px;"></div>
<svg class="a" style="left:1784px;top:268px" width="12" height="12" fill="none" stroke="#fff" stroke-width="1.300"><path d="M2.500,6 L5,8.500 L9.500,3.500"/></svg>
<div class="t" style="left:1822.00px;top:268px;font-size:12px;line-height:14px;color:#252423;letter-spacing:-0.103px;">style name</div>
<div class="a" style="left:1784px;top:292px;width:10px;height:10px;border:1px solid #8a8886;border-radius:2px;background:#fff;"></div>
<div class="t" style="left:1822.00px;top:292px;font-size:12px;line-height:14px;color:#252423;letter-spacing:-0.038px;">style url</div>
<div class="a" style="left:1784px;top:316px;width:10px;height:10px;border:1px solid #8a8886;border-radius:2px;background:#fff;"></div>
<div class="t" style="left:1822.00px;top:316px;font-size:12px;line-height:14px;color:#252423;letter-spacing:0.219px;">thumbnail</div>
<div class="a" style="left:0;top:159px;width:1920px;height:1px;background:#dcdcdc;"></div><div class="a" style="left:3px;top:160px;width:1917px;height:1px;background:#c4c4c4;"></div><div class="a" style="left:3px;top:161px;width:1917px;height:1px;background:rgba(0,0,0,0.10);"></div><div class="a" style="left:3px;top:162px;width:1917px;height:1px;background:rgba(0,0,0,0.045);"></div><div class="a" style="left:3px;top:163px;width:1917px;height:1px;background:rgba(0,0,0,0.015);"></div>
</div>
</body></html>
